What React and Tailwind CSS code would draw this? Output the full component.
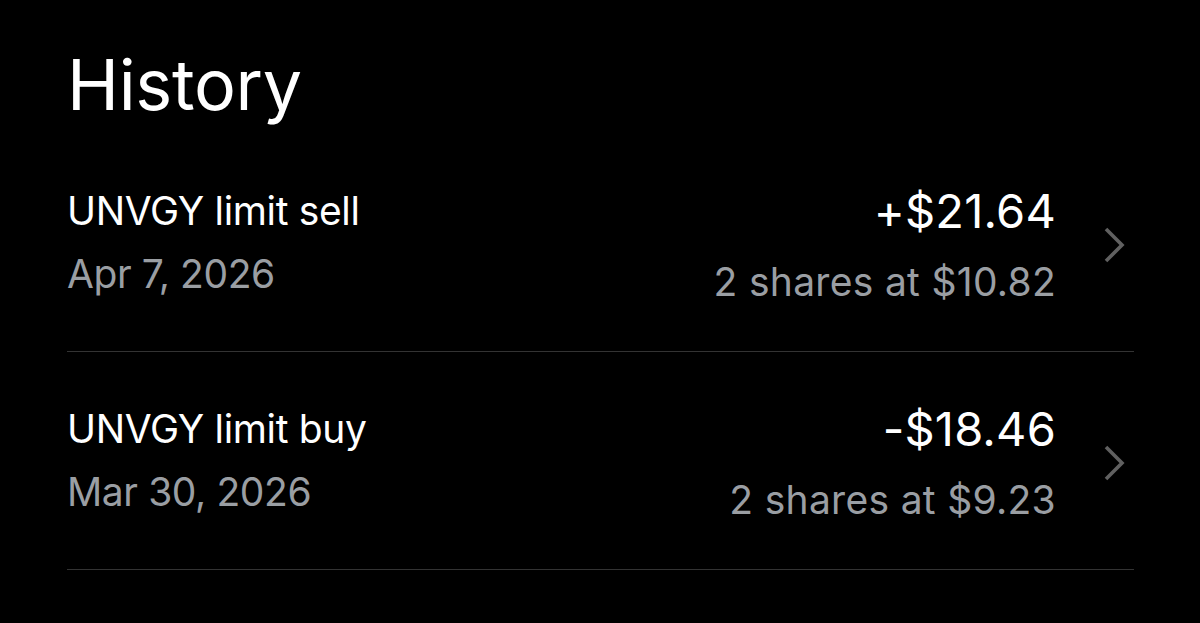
const rows = [
  { title: "UNVGY limit sell", date: "Apr 7, 2026", amount: "+$21.64", detail: "2 shares at $10.82" },
  { title: "UNVGY limit buy", date: "Mar 30, 2026", amount: "-$18.46", detail: "2 shares at $9.23" },
];

const Chevron = () => (
  <svg width="24" height="40" viewBox="0 0 24 40" fill="none" className="ml-[46px] mr-[8px] -mt-[2px] shrink-0">
    <polyline points="4,4 20,20 4,36" stroke="#606060" strokeWidth="3.6" strokeLinecap="butt" strokeLinejoin="miter" />
  </svg>
);

export default function App() {
  return (
    <div className="min-h-[623px] w-[1200px] bg-black text-white font-['Inter',sans-serif] pl-[67px] pr-[66px] pt-[42px]">
      <h1 className="text-[70px] leading-[86px] font-normal tracking-[-0.3px]">History</h1>

      <div className="mt-[6px]">
        {rows.map((r) => (
          <div key={r.title} className="flex items-start justify-between h-[218px] border-b border-[#333333] pt-[51px]">
            <div className="flex flex-col pt-[2px]">
              <span className="text-[39px] leading-[48px] tracking-[-0.35px]">{r.title}</span>
              <span className="mt-[15px] text-[39px] leading-[48px] text-[#9a9ea3] tracking-[-0.4px]">{r.date}</span>
            </div>
            <div className="flex items-center">
              <div className="flex flex-col items-end">
                <span className="text-[47px] leading-[52px] tracking-[0.2px]">{r.amount}</span>
                <span className="mt-[21px] text-[39px] leading-[48px] text-[#9a9ea3] tracking-[0.3px]">{r.detail}</span>
              </div>
              <Chevron />
            </div>
          </div>
        ))}
      </div>
    </div>
  );
}
